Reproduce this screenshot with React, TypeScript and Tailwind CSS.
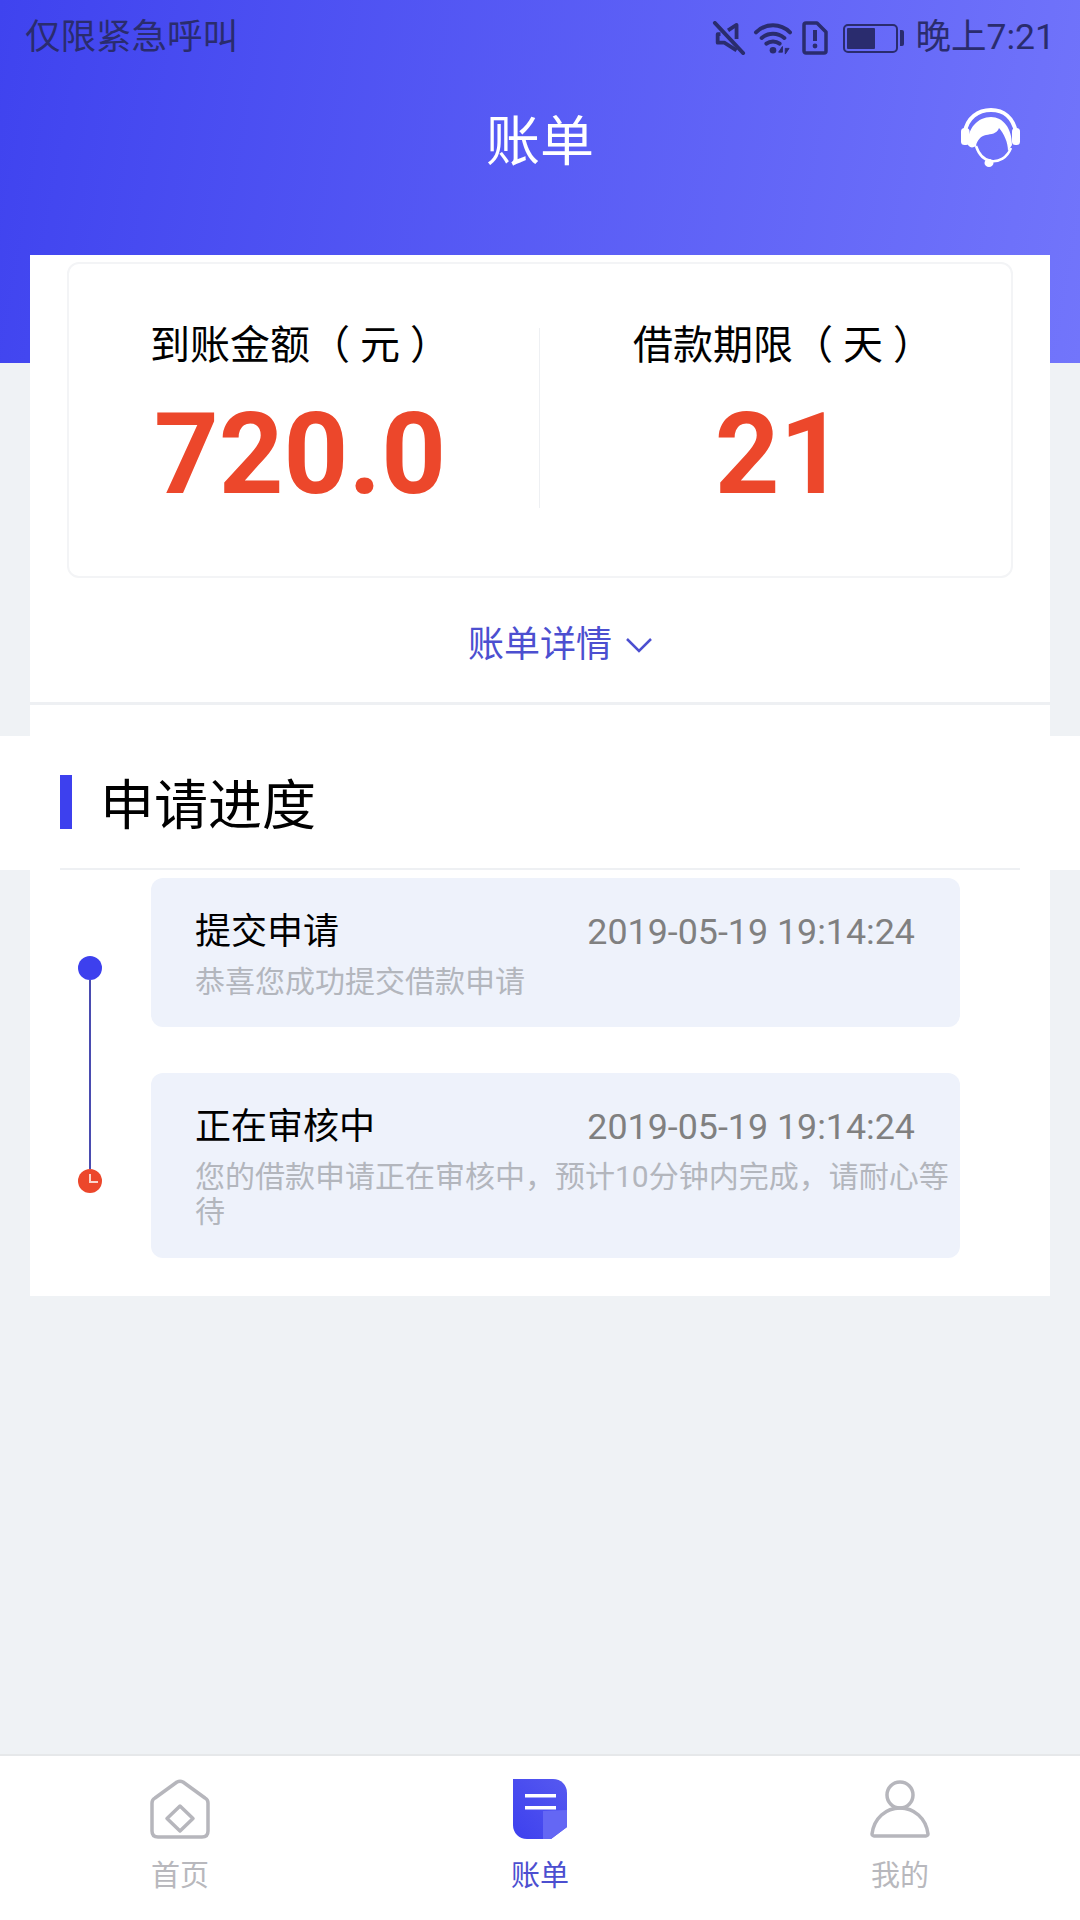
import React from "react";

const font = { fontFamily: 'Roboto, "Noto Sans CJK SC", sans-serif' };

function MuteIcon() {
  return (
    <svg width="34" height="34" viewBox="0 0 34 36" fill="none" stroke="#2a2c6e" strokeWidth="4">
      <path d="M8 14H5v9h7l13 8M25 19V4l-9 6" strokeLinejoin="round" />
      <path d="M2 2l30 32" strokeLinecap="round" />
    </svg>
  );
}

function WifiIcon() {
  return (
    <svg width="40" height="34" viewBox="0 0 40 36" fill="none" stroke="#2a2c6e" strokeWidth="4.2">
      <path d="M2 12c10-10 26-10 36 0M8 18c7-6 17-6 24 0M13 24c4-3 10-3 14 0" strokeLinecap="round" />
      <circle cx="20" cy="31" r="3.5" fill="#2a2c6e" stroke="none" />
      <path d="M30 27l-4 6h4zM33 35l4-6h-4z" fill="#2a2c6e" strokeWidth="1" />
    </svg>
  );
}

function SimAlertIcon() {
  return (
    <svg width="26" height="34" viewBox="0 0 26 34" fill="none">
      <path d="M4 2h11l9 9v19a2 2 0 0 1-2 2H4a2 2 0 0 1-2-2V4a2 2 0 0 1 2-2z" stroke="#2a2c6e" strokeWidth="3.5" strokeLinejoin="round" />
      <path d="M13 9v11" stroke="#2a2c6e" strokeWidth="4" />
      <circle cx="13" cy="25" r="2.4" fill="#2a2c6e" />
    </svg>
  );
}

function BatteryIcon() {
  return (
    <div className="flex items-center gap-[2px]">
      <div className="w-[55px] h-[29px] rounded-[5px] border-2 border-[#2a2c6e] p-[2px]">
        <div className="w-[28px] h-full bg-[#2a2c6e] rounded-[1px]" />
      </div>
      <div className="w-[4px] h-[16px] bg-[#2a2c6e] rounded-r-[2px]" />
    </div>
  );
}

function HeadsetIcon() {
  return (
    <svg width="59" height="60" viewBox="0 0 59 60">
      <path d="M4 24C6 10 17 2 30 2c13 0 22 8 25 22" fill="none" stroke="#fff" strokeWidth="4" />
      <rect x="0" y="20" width="8.5" height="17" rx="3.5" fill="#fff" />
      <rect x="51" y="20" width="8" height="17" rx="3.5" fill="#fff" />
      <path d="M7 37C6 20 17 9 30 9c12 0 21 11 21 28l-4 6c0-9-4-17-9-23-2 6-8 6-13 7-5 1-9 5-10 11-3 2-6 2-8-1z" fill="#fff" />
      <path d="M15 38c3 9 8 14 15 15 8 1 16-3 20-13" fill="none" stroke="#fff" strokeWidth="2.5" />
      <ellipse cx="28" cy="55" rx="4.5" ry="4" fill="#fff" />
    </svg>
  );
}

function HomeIcon() {
  return (
    <svg width="60" height="60" viewBox="0 0 60 60" fill="none" stroke="#b6b6bc" strokeWidth="3.5" strokeLinejoin="round">
      <path d="M2 24c0-2 1-4 3-5L27 3c2-1 4-1 6 0l22 16c2 1 3 3 3 5v28c0 4-2 6-6 6H8c-4 0-6-2-6-6z" />
      <path d="M30 27l13 12.5L30 52 17 39.5z" />
    </svg>
  );
}

function BillIcon() {
  return (
    <svg width="54" height="60" viewBox="0 0 54 60">
      <defs>
        <linearGradient id="billBody" x1="0" y1="1" x2="1" y2="0">
          <stop offset="0" stopColor="#3d40ee" />
          <stop offset="1" stopColor="#5659f0" />
        </linearGradient>
      </defs>
      <path d="M0 0h40c8 0 14 6 14 14v34L38 60H14C6 60 0 54 0 46z" fill="url(#billBody)" />
      <path d="M30 32l24-1v17L38 60h-8z" fill="#6467f4" />
      <rect x="12" y="15" width="31" height="3.5" fill="#fff" />
      <rect x="12" y="27" width="31" height="3.5" fill="#fff" />
    </svg>
  );
}

function PersonIcon() {
  return (
    <svg width="60" height="58" viewBox="0 0 60 58" fill="none" stroke="#b6b6bc" strokeWidth="3.5" strokeLinejoin="round">
      <circle cx="30" cy="15" r="13" />
      <path d="M2 54C4 38 16 28 30 28s26 10 28 26c0 1-1 2-2 2H4c-1 0-2-1-2-2z" />
    </svg>
  );
}

function StatBlock({
  label,
  unit,
  value,
  labelClass,
}: {
  label: string;
  unit: string;
  value: string;
  labelClass?: string;
}) {
  return (
    <div className="flex-1 flex flex-col items-center">
      <div className={`text-[40px] leading-[56px] text-black whitespace-nowrap ${labelClass ?? ""}`}>
        {label}（<span className="mx-[10px]">{unit}</span>）
      </div>
      <div className="mt-[21px] text-[113px] leading-[120px] font-bold text-[#ec472b]">{value}</div>
    </div>
  );
}

function ProgressCard({
  title,
  time,
  desc,
  className,
}: {
  title: string;
  time: string;
  desc: string;
  className: string;
}) {
  return (
    <div className={`bg-[#eef2fb] rounded-[12px] pl-[44px] pr-[10px] ${className}`}>
      <div className="flex items-center justify-between pr-[35px]">
        <span className="text-[36px] leading-[50px] text-black">{title}</span>
        <span className="text-[35.8px] leading-[50px] text-[#808080]">{time}</span>
      </div>
      <p className="mt-[7px] text-[30px] leading-[35px] text-[#b3b6bd]">{desc}</p>
    </div>
  );
}

export default function App() {
  return (
    <div className="w-[1080px] h-[1920px] flex flex-col bg-[#eff2f5] overflow-hidden" style={font}>
      <header className="h-[363px] shrink-0 bg-[linear-gradient(100deg,#3f43ef,#7275fb)]">
        <div className="flex items-center justify-between pl-[25px] pr-[25px] pt-[12px] h-[64px] text-[35.5px] text-[#2a2c6e]">
          <span>仅限紧急呼叫</span>
          <div className="flex items-center">
            <MuteIcon />
            <span className="ml-[7px]">
              <WifiIcon />
            </span>
            <span className="ml-[9px]">
              <SimAlertIcon />
            </span>
            <span className="ml-[15px]">
              <BatteryIcon />
            </span>
            <span className="ml-[12px]">晚上7:21</span>
          </div>
        </div>
        <div className="relative flex items-center justify-center h-[100px] mt-[28px]">
          <span className="text-[54px] text-white">账单</span>
          <div className="absolute right-[60px] top-[16px]">
            <HeadsetIcon />
          </div>
        </div>
      </header>

      <main className="mx-[30px] -mt-[108px] h-[1041px] shrink-0 bg-white">
        <div className="pt-[7px] px-[37px]">
          <div className="h-[316px] flex items-start pt-[54px] rounded-[12px] border-2 border-[#f3f4f6]">
            <div className="w-[470px] flex pl-[2px] pr-[10px]">
              <StatBlock label="到账金额" unit="元" value="720.0" />
            </div>
            <div className="w-px h-[180px] mt-[10px] bg-[#eef0f3] shrink-0" />
            <div className="flex-1 flex pl-[8px]">
              <StatBlock label="借款期限" unit="天" value="21" labelClass="ml-[7px]" />
            </div>
          </div>
        </div>
        <div className="h-[127px] pt-[10px] pl-[40px] flex items-center justify-center gap-[14px] border-b-[3px] border-[#eef0f3]">
          <span className="text-[36px] text-[#4c4fd0]">账单详情</span>
          <svg width="26" height="16" viewBox="0 0 26 16" fill="none" stroke="#4c4fd0" strokeWidth="2.5">
            <path d="M1 2l12 12L25 2" />
          </svg>
        </div>

        <section className="-mx-[30px] mt-[31px] h-[134px] bg-white pl-[60px] pr-[60px]">
          <div className="h-full flex items-center gap-[28px] border-b-2 border-[#eef0f3]">
            <div className="w-[12px] h-[54px] bg-[#3d40ee]" />
            <h2 className="pt-[9px] text-[54px] leading-[70px] font-normal text-black">申请进度</h2>
          </div>
        </section>

        <div className="flex pl-[48px] pt-[8px]">
          <div className="w-[73px] shrink-0 flex flex-col pt-[78px]">
            <div className="w-[24px] h-[24px] rounded-full bg-[#3d40ee]" />
            <div className="ml-[11px] w-[2px] h-[189px] bg-[#4a4cb0]" />
            <div className="w-[24px] h-[24px] rounded-full bg-[#ec472b] relative">
              <div className="absolute left-[11px] top-[5px] w-[9px] h-[9px] border-l-2 border-b-2 border-[#fbd5cc]" />
            </div>
          </div>
          <div className="w-[809px] flex flex-col gap-[46px]">
            <ProgressCard
              className="h-[149px] pt-[29px]"
              title="提交申请"
              time="2019-05-19 19:14:24"
              desc="恭喜您成功提交借款申请"
            />
            <ProgressCard
              className="h-[185px] pt-[29px]"
              title="正在审核中"
              time="2019-05-19 19:14:24"
              desc="您的借款申请正在审核中，预计10分钟内完成，请耐心等待"
            />
          </div>
        </div>
      </main>

      <div className="flex-1" />

      <nav className="h-[166px] shrink-0 bg-white border-t-2 border-[#e6e8ea] grid grid-cols-3 pt-[23px]">
        <div className="flex flex-col items-center gap-[16px]">
          <HomeIcon />
          <span className="text-[29px] leading-[42px] text-[#b8b8bd]">首页</span>
        </div>
        <div className="flex flex-col items-center gap-[16px]">
          <BillIcon />
          <span className="text-[29px] leading-[42px] text-[#4c4fd0]">账单</span>
        </div>
        <div className="flex flex-col items-center gap-[16px]">
          <div className="h-[60px] flex items-center">
            <PersonIcon />
          </div>
          <span className="text-[29px] leading-[42px] text-[#b8b8bd]">我的</span>
        </div>
      </nav>
    </div>
  );
}
